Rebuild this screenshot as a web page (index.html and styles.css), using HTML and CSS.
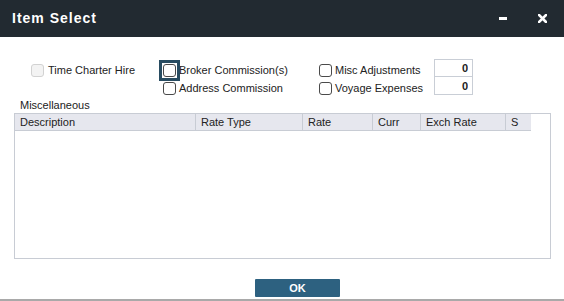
FILE: index.html
```html
<!DOCTYPE html>
<html>
<head>
<meta charset="utf-8">
<link rel="stylesheet" href="styles.css">
</head>
<body>
<div class="window">
  <div class="titlebar">
    <span class="title">Item Select</span>
    <span class="controls">
      <span class="minimize"></span>
      <svg class="close" width="9" height="9" viewBox="0 0 9 9"><path d="M1 1L8 8M8 1L1 8" stroke="#fff" stroke-width="2.6" stroke-linecap="square"/></svg>
    </span>
  </div>
  <div class="content">
    <div class="options">
      <label class="opt c1 r1"><input type="checkbox" class="cb" disabled><span>Time Charter Hire</span></label>
      <label class="opt c2 r1"><span class="focus-wrap"><input type="checkbox" class="cb"></span><span>Broker Commission(s)</span></label>
      <label class="opt c2 r2"><input type="checkbox" class="cb"><span>Address Commission</span></label>
      <label class="opt c3 r1"><input type="checkbox" class="cb"><span>Misc Adjustments</span></label>
      <label class="opt c3 r2"><input type="checkbox" class="cb"><span>Voyage Expenses</span></label>
      <div class="inputs">
        <input class="num" type="text" value="0">
        <input class="num second" type="text" value="0">
      </div>
    </div>
    <div class="section-label">Miscellaneous</div>
    <div class="table">
      <div class="thead">
        <div class="th w-desc">Description</div>
        <div class="th w-type">Rate Type</div>
        <div class="th w-rate">Rate</div>
        <div class="th w-curr">Curr</div>
        <div class="th w-exch">Exch Rate</div>
        <div class="th w-s">S</div>
      </div>
    </div>
  </div>
  <div class="footer">
    <button class="ok">OK</button>
  </div>
</div>
</body>
</html>
```
FILE: styles.css
```css
* { box-sizing: border-box; }
html, body { margin: 0; padding: 0; background: #fff; }
body {
  font-family: "Liberation Sans", Arial, sans-serif;
  font-size: 11px;
  color: #222;
  width: 564px;
  height: 301px;
  overflow: hidden;
}
.window { display: flex; flex-direction: column; height: 301px; }
.titlebar {
  height: 37px;
  background: #222a31;
  display: flex;
  align-items: center;
  justify-content: space-between;
  padding: 0 17px 0 12px;
  flex: none;
}
.title {
  color: #fff;
  font-weight: bold;
  font-size: 14px;
  letter-spacing: 1px;
  margin-top: -2px;
}
.controls { display: flex; align-items: center; gap: 31px; margin-top: -1px; }
.minimize { width: 8px; height: 3px; background: #fff; margin-top: 1px; }
.close { display: block; }
.content { padding: 22px 13px 0 14px; flex: 1; display: flex; flex-direction: column; }
.options {
  display: grid;
  grid-template-columns: 132px 156px 115px 39px;
  grid-template-rows: 18px 18px;
  margin-left: 17px;
  margin-top: 2px;
}
.opt { display: flex; align-items: center; gap: 3px; white-space: nowrap; color: #222; }
.c1 { grid-column: 1; }
.c2 { grid-column: 2; }
.c3 { grid-column: 3; }
.r1 { grid-row: 1; }
.r2 { grid-row: 2; }
.c1 .cb { margin-right: 1px; }
.cb {
  appearance: none;
  -webkit-appearance: none;
  width: 13px;
  height: 13px;
  margin: 0;
  border: 1px solid #4a4a4a;
  border-radius: 3px;
  background: #fff;
  flex: none;
  display: block;
}
.cb:disabled { border-color: #d2d2d2; background: #f3f3f3; }
.focus-wrap { position: relative; display: block; flex: none; width: 13px; height: 13px; line-height: 0; }
.focus-wrap::after {
  content: "";
  position: absolute;
  left: -4px;
  top: -4px;
  right: -4px;
  bottom: -4px;
  border: 3px solid #284c61;
  pointer-events: none;
}
.inputs { grid-column: 4; grid-row: 1 / span 2; display: flex; flex-direction: column; margin-top: -2px; }
.num {
  width: 39px;
  height: 18px;
  border: 1px solid #c9ced6;
  padding: 0 4px 0 0;
  text-align: right;
  font-family: "Liberation Sans", Arial, sans-serif;
  font-size: 11px;
  font-weight: bold;
  color: #222;
  background: #fff;
  outline: none;
}
.num.second { border-top: none; }
.section-label { height: 16px; line-height: 16px; padding-left: 6px; color: #222; }
.table {
  height: 146px;
  border: 1px solid #c8ccd4;
}
.thead { display: flex; width: 516px; height: 17px; background: #e6e7ee; border-bottom: 1px solid #c8ccd4; }
.th { line-height: 16px; padding-left: 5px; border-right: 1px solid #c8ccd4; color: #222; white-space: nowrap; }
.th:last-child { border-right: none; }
.w-desc { width: 181px; }
.w-type { width: 107px; }
.w-rate { width: 70px; }
.w-curr { width: 48px; }
.w-exch { width: 85px; }
.w-s { width: 25px; }
.footer {
  height: 42px;
  flex: none;
  padding-top: 20px;
  border-bottom: 2px solid #a9a9a9;
}
.ok {
  display: block;
  margin-left: 255px;
  width: 85px;
  height: 18px;
  border: none;
  border-radius: 1px;
  background: #2d6180;
  color: #fff;
  font-family: "Liberation Sans", Arial, sans-serif;
  font-size: 11px;
  font-weight: bold;
  padding: 0;
}
```
